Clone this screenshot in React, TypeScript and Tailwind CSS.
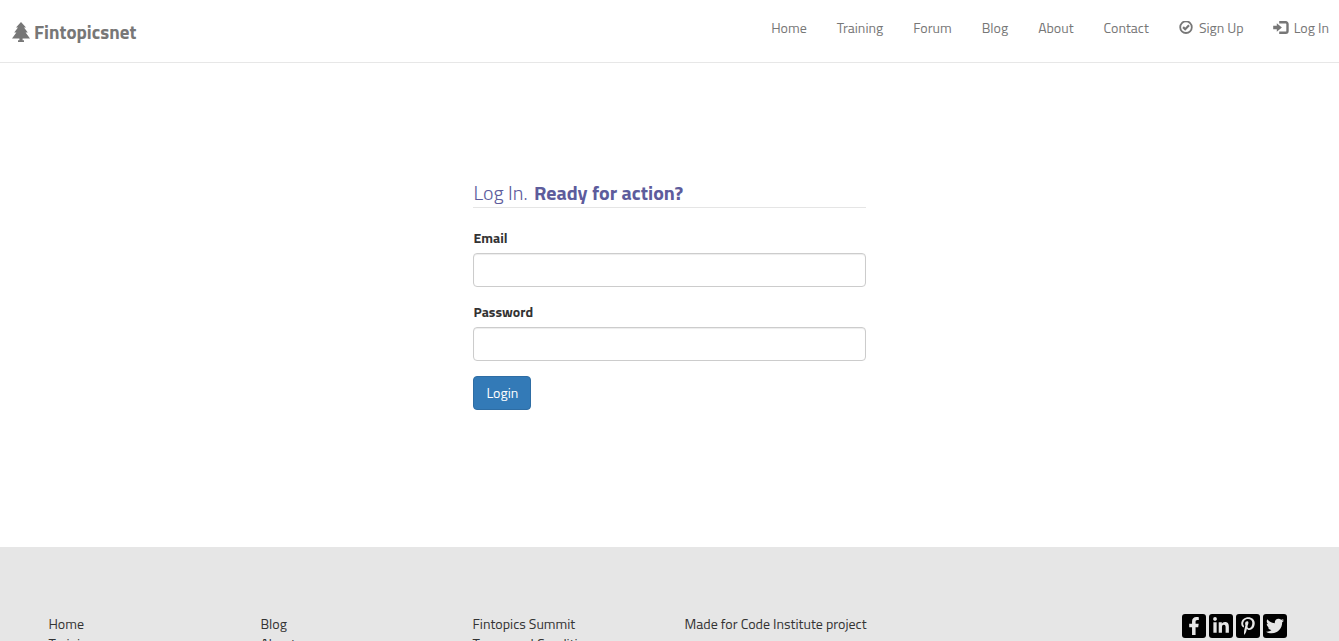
import { useState } from 'react';
import type { ReactNode } from 'react';
import { FaFacebookF, FaLinkedinIn, FaPinterestP, FaTwitter } from 'react-icons/fa';

function TreeIcon() {
  return (
    <svg viewBox="0 0 18 20" className="h-5 w-[18px] shrink-0" fill="currentColor" aria-hidden="true">
      <path d="M9 0 4 5.4h2L2.2 10.4h2.2L0 16.4h7.4v1.8H6V20h6v-1.8h-1.4v-1.8H18l-4.4-6h2.2L12 5.4h2z" />
    </svg>
  );
}

function OkCircleIcon() {
  return (
    <svg viewBox="0 0 14 14" className="h-3.5 w-3.5 shrink-0" fill="none" stroke="currentColor" aria-hidden="true">
      <circle cx="7" cy="6.2" r="5.8" strokeWidth="1.8" />
      <path d="m4.1 6.1 2.1 2.1 3.8-3.9" strokeWidth="2.2" />
    </svg>
  );
}

function LogInIcon() {
  return (
    <svg viewBox="0 0 14 14" className="h-3.5 w-3.5 shrink-0 overflow-visible" fill="currentColor" aria-hidden="true">
      <path d="M-.8 4.8h3.6V2.2L7.9 6.5 2.8 10.8V8.2H-.8z" />
      <path d="M5.2 1.3h6.6A1.7 1.7 0 0 1 13.5 3v7a1.7 1.7 0 0 1-1.7 1.7H5.2" fill="none" stroke="currentColor" strokeWidth="2.4" />
    </svg>
  );
}

const navItems: { label: string; icon?: ReactNode }[] = [
  { label: 'Home' },
  { label: 'Training' },
  { label: 'Forum' },
  { label: 'Blog' },
  { label: 'About' },
  { label: 'Contact' },
  { label: 'Sign Up', icon: <OkCircleIcon /> },
  { label: 'Log In', icon: <LogInIcon /> },
];

const footerColumns = [
  ['Home', 'Training'],
  ['Blog', 'About'],
  ['Fintopics Summit', 'Terms and Conditions'],
];

const socials = [
  { name: 'Facebook', icon: <FaFacebookF className="h-[18px] w-[18px]" /> },
  { name: 'LinkedIn', icon: <FaLinkedinIn className="h-[18px] w-[18px]" /> },
  { name: 'Pinterest', icon: <FaPinterestP className="h-[18px] w-[18px]" /> },
  { name: 'Twitter', icon: <FaTwitter className="h-[18px] w-[18px]" /> },
];

const inputClass =
  'h-[34px] w-full rounded-sm border border-[#ccc] bg-white px-3 text-sm text-[#555] shadow-[inset_0_1px_1px_rgba(0,0,0,0.075)] outline-none focus:border-[#66afe9]';

export default function App() {
  const [email, setEmail] = useState('');
  const [password, setPassword] = useState('');

  return (
    <div className="bg-white font-['Titillium_Web',Roboto,sans-serif] text-sm leading-5 text-[#333]">
      <header className="flex h-[63px] items-start justify-between border-b border-[#e7e7e7] pr-[10px] pl-3 text-[#777]">
        <a href="#home" className="flex items-center gap-1 pt-5 text-[19px] leading-6 font-bold">
          <TreeIcon />
          Fintopicsnet
        </a>
        <nav className="flex gap-[30px] pt-[18px] font-normal">
          {navItems.map((item) => (
            <a key={item.label} href="#nav" className="flex items-center gap-[6px]">
              {item.icon}
              {item.label}
            </a>
          ))}
        </nav>
      </header>

      <main className="grid min-h-[484px] grid-cols-12 px-[2.5%] pt-[117px]">
        <form className="col-span-4 col-start-5 px-4" onSubmit={(e) => e.preventDefault()}>
          <h1 className="border-b border-[#e5e5e5] pb-[2px] text-xl leading-[25px] font-light text-[#5d5c9c]">
            Log In. <strong className="ml-[2px] font-bold">Ready for action?</strong>
          </h1>
          <label htmlFor="email" className="mt-5 mb-[5px] block font-bold">Email</label>
          <input id="email" type="email" value={email} onChange={(e) => setEmail(e.target.value)} className={inputClass} />
          <label htmlFor="password" className="mt-[15px] mb-[5px] block font-bold">Password</label>
          <input id="password" type="password" value={password} onChange={(e) => setPassword(e.target.value)} className={inputClass} />
          <button type="submit" className="mt-[15px] h-[34px] rounded-sm border border-[#2e6da4] bg-[#337ab7] px-3 text-white">
            Login
          </button>
        </form>
      </main>

      <footer className="grid grid-cols-12 bg-[#e6e6e6] px-[2.5%] pt-[67px] pb-10 font-normal">
        {footerColumns.map((links) => (
          <ul key={links[0]} className="col-span-2 px-[15px]">
            {links.map((link) => (
              <li key={link}>
                <a href="#footer">{link}</a>
              </li>
            ))}
          </ul>
        ))}
        <p className="col-span-4 px-[15px]">Made for Code Institute project</p>
        <div className="col-span-2 flex justify-end gap-[3px] pr-[19px]">
          {socials.map((social) => (
            <a key={social.name} href="#social" aria-label={social.name} className="flex h-6 w-6 items-center justify-center rounded-[3px] bg-black text-[#e6e6e6]">
              {social.icon}
            </a>
          ))}
        </div>
      </footer>
    </div>
  );
}
